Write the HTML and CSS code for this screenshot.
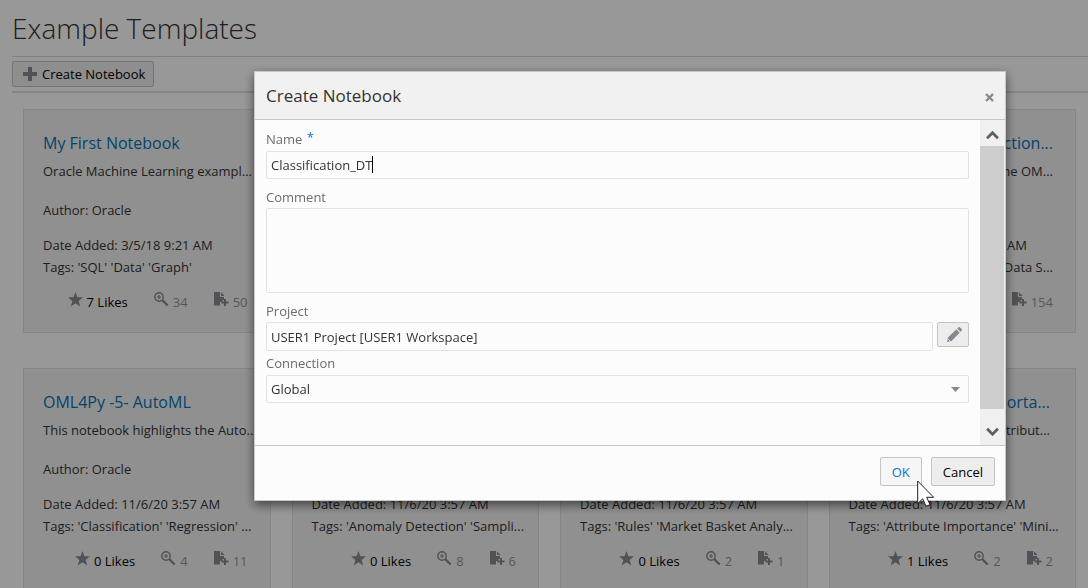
FILE: index.html
```html
<!DOCTYPE html>
<html lang="en">
<head>
<meta charset="utf-8">
<title>Example Templates</title>
<link rel="stylesheet" href="styles.css">
</head>
<body>
<svg class="defs" aria-hidden="true">
  <symbol id="star" viewBox="0 0 14 14"><path d="M7 0l1.8 4.9 5.2.1-4.1 3.300 1.500 5.200L7 10.500l-4.400 3 1.500-5.200L0 5l5.200-.1z" fill="currentColor"/></symbol>
  <symbol id="view" viewBox="0 0 15 15"><circle cx="5" cy="5" r="4.200" fill="none" stroke="currentColor" stroke-width="1.400"/><path d="M5 3v4M3 5h4" stroke="currentColor" stroke-width="1.200"/><path d="M8.200 8.200l5.500 5.300" stroke="currentColor" stroke-width="2.400"/></symbol>
  <symbol id="copy" viewBox="0 0 15 15"><path d="M0 0h6v5h4v3H8.500v2H6v3.500H0z" fill="currentColor"/><path d="M7 .3L10.600 4H7z" fill="currentColor"/><path d="M11 7v7M7.500 10.500h7" stroke="currentColor" stroke-width="2"/></symbol>
</svg>

<main class="page">
  <h1 class="page-title">Example Templates</h1>
  <div class="toolbar">
    <button class="btn create" type="button">
      <svg class="plus" viewBox="0 0 14 14" aria-hidden="true"><path d="M7 0v14M0 7h14" stroke="currentColor" stroke-width="4"/></svg>
      Create Notebook
    </button>
  </div>

  <section class="cards">
    <article class="card">
      <a class="card-title" href="#">My First Notebook</a>
      <p class="desc">Oracle Machine Learning exampl...</p>
      <p class="author">Author: Oracle</p>
      <div class="meta">
        <p>Date Added: 3/5/18 9:21 AM</p>
        <p>Tags: 'SQL' 'Data' 'Graph'</p>
        <div class="stats">
          <span class="stat likes"><svg><use href="#star"/></svg>7 Likes</span>
          <span class="stat"><svg><use href="#view"/></svg>34</span>
          <span class="stat"><svg><use href="#copy"/></svg>50</span>
        </div>
      </div>
    </article>
    <article class="card"></article>
    <article class="card"></article>
    <article class="card end">
      <a class="card-title" href="#">ction...</a>
      <p class="desc">the OM...</p>
      <div class="meta">
        <p class="date-end">AM</p>
        <p>'Data S...</p>
        <div class="stats">
          <span class="stat"><svg><use href="#copy"/></svg>154</span>
        </div>
      </div>
    </article>

    <article class="card">
      <a class="card-title" href="#">OML4Py -5- AutoML</a>
      <p class="desc">This notebook highlights the Auto...</p>
      <p class="author">Author: Oracle</p>
      <div class="meta">
        <p>Date Added: 11/6/20 3:57 AM</p>
        <p>Tags: 'Classification' 'Regression' ...</p>
        <div class="stats">
          <span class="stat likes"><svg><use href="#star"/></svg>0 Likes</span>
          <span class="stat"><svg><use href="#view"/></svg>4</span>
          <span class="stat"><svg><use href="#copy"/></svg>11</span>
        </div>
      </div>
    </article>
    <article class="card">
      <div class="meta">
        <p>Date Added: 11/6/20 3:57 AM</p>
        <p>Tags: 'Anomaly Detection' 'Sampli...</p>
        <div class="stats">
          <span class="stat likes"><svg><use href="#star"/></svg>0 Likes</span>
          <span class="stat"><svg><use href="#view"/></svg>8</span>
          <span class="stat"><svg><use href="#copy"/></svg>6</span>
        </div>
      </div>
    </article>
    <article class="card">
      <div class="meta">
        <p>Date Added: 11/6/20 3:57 AM</p>
        <p>Tags: 'Rules' 'Market Basket Analy...</p>
        <div class="stats">
          <span class="stat likes"><svg><use href="#star"/></svg>0 Likes</span>
          <span class="stat"><svg><use href="#view"/></svg>2</span>
          <span class="stat"><svg><use href="#copy"/></svg>1</span>
        </div>
      </div>
    </article>
    <article class="card">
      <a class="card-title to-end" href="#">Importa...</a>
      <p class="desc to-end">Attribut...</p>
      <div class="meta">
        <p>Date Added: 11/6/20 3:57 AM</p>
        <p>Tags: 'Attribute Importance' 'Mini...</p>
        <div class="stats">
          <span class="stat likes"><svg><use href="#star"/></svg>1 Likes</span>
          <span class="stat"><svg><use href="#view"/></svg>2</span>
          <span class="stat"><svg><use href="#copy"/></svg>2</span>
        </div>
      </div>
    </article>
  </section>
</main>

<div class="overlay">
  <form class="dialog" role="dialog" aria-labelledby="dialog-title">
    <header class="dialog-head">
      <h2 id="dialog-title">Create Notebook</h2>
      <button class="close" type="button" aria-label="Close"><svg viewBox="0 0 9 9"><path d="M1 1l7 7M8 1L1 8" stroke="currentColor" stroke-width="2.300"/></svg></button>
    </header>
    <div class="dialog-body">
      <div class="fields">
        <label for="name">Name <span class="required">*</span></label>
        <div class="name-box">
          <input class="field" id="name" type="text" value="Classification_DT">
          <span class="caret"></span>
        </div>
        <label for="comment">Comment</label>
        <textarea class="field" id="comment"></textarea>
        <label for="project">Project</label>
        <div class="project">
          <input class="field" id="project" type="text" value="USER1 Project [USER1 Workspace]">
          <button class="btn edit" type="button" aria-label="Edit project"><svg viewBox="0 0 15 15"><path d="M0 15l1-4.500L9.300 2.300l3.400 3.400L4.500 14z" fill="currentColor"/><path d="M10.200 1.500L11.600.2q.6-.4 1.200 0l2 2q.4.600 0 1.200l-1.300 1.400z" fill="currentColor"/><path d="M.8 11.800l2.400 2.400" stroke="#ededed" stroke-width=".8"/></svg></button>
        </div>
        <label for="connection">Connection</label>
        <div class="select-box">
          <select class="field" id="connection"><option>Global</option></select>
          <svg class="arrow" viewBox="0 0 9 5" aria-hidden="true"><path d="M0 0h9L4.500 5z" fill="currentColor"/></svg>
        </div>
      </div>
      <div class="scrollbar">
        <button type="button" aria-label="Scroll up"><svg viewBox="0 0 12 9"><path d="M1 7.500l5-5 5 5" fill="none" stroke="currentColor" stroke-width="2.600"/></svg></button>
        <div class="thumb"></div>
        <button class="down" type="button" aria-label="Scroll down"><svg viewBox="0 0 12 9"><path d="M1 1.500l5 5 5-5" fill="none" stroke="currentColor" stroke-width="2.600"/></svg></button>
      </div>
    </div>
    <footer class="dialog-foot">
      <button class="btn ok" type="button">OK<svg class="pointer" viewBox="0 0 19 28" aria-hidden="true"><path d="M.7 1v22.500l5-4.700 3.300 7.500 4-1.700-3.300-7.300h7z" fill="#fff" stroke="#1c1c24"/></svg></button>
      <button class="btn" type="button">Cancel</button>
    </footer>
  </form>
</div>
</body>
</html>
```

FILE: styles.css
```css
* { box-sizing: border-box; }

body {
  margin: 0;
  height: 100vh;
  overflow: hidden;
  background: #fdfdfd;
  color: #333;
  font: 13px/20px "Open Sans", "Noto Sans", sans-serif;
}

h1, h2, p { margin: 0; font-weight: 400; }

button, input, textarea, select { font: inherit; color: inherit; }

.defs { position: absolute; width: 0; height: 0; }

.page { padding-left: 12px; }

.page-title {
  height: 57px;
  border-bottom: 1px solid #d6d6d6;
  font-size: 28px;
  font-weight: 300;
  line-height: 56px;
}

.toolbar {
  padding: 4px 0;
  border-bottom: 2px solid #dcdcdc;
}

.btn {
  display: flex;
  align-items: center;
  justify-content: center;
  border: 1px solid #c4c4c4;
  border-radius: 2px;
  background: #ededed;
  color: #000;
  white-space: nowrap;
}

.create { height: 26px; padding: 0 8px 0 10px; gap: 5px; }
.plus { width: 14px; height: 14px; color: #84898f; }

.cards {
  display: grid;
  grid-template-columns: repeat(4, minmax(0, 1fr));
  gap: 35px 21px;
  padding: 16px 12px 0 11px;
}

.card {
  display: flex;
  flex-direction: column;
  min-height: 224px;
  padding: 21px 19px 20px;
  border: 1px solid #dfdfdf;
  background: #f1f1f1;
  white-space: nowrap;
}

.card-title {
  color: #0572b8;
  font-size: 16px;
  line-height: 24px;
  text-decoration: none;
}

.desc { margin-top: 6px; }
.author { margin-top: 19px; }
.meta { margin-top: auto; }
.meta p { line-height: 22px; }
.end, .to-end { text-align: right; padding-right: 22px; }
.card > .to-end { padding-right: 6px; }
.date-end { padding-right: 26px; }

.stats {
  display: flex;
  justify-content: flex-end;
  gap: 26px;
  margin-top: 14px;
  padding-right: 3px;
  color: #929292;
}

.end .stats { padding-right: 0; }
.stat { display: flex; gap: 4px; }
.stat svg { width: 15px; height: 15px; color: #84898f; }
.likes { color: #000; }

.overlay {
  position: fixed;
  inset: 0;
  padding: 71px 82px 0 254px;
  background: rgba(0, 0, 0, .4);
}

.dialog {
  border: 1px solid #c8c8c8;
  background: #fcfcfc;
  box-shadow: 0 4px 10px rgba(0, 0, 0, .55);
}

.dialog-head {
  display: flex;
  align-items: center;
  justify-content: space-between;
  height: 48px;
  padding: 0 11px;
  border-bottom: 1px solid #c8c8c8;
  background: #f1f1f1;
}

.dialog-head h2 { font-size: 17px; line-height: 24px; }

.close {
  display: flex;
  margin-top: 4px;
  padding: 0;
  border: 0;
  background: none;
  color: #84898f;
}
.close svg { width: 9px; height: 9px; }

.dialog-body { display: flex; height: 325px; }

.fields {
  display: flex;
  flex: 1;
  flex-direction: column;
  min-width: 0;
  padding: 9px 11px 0;
}

label { color: #6c6c6c; line-height: 20px; }
.required { margin-left: 1px; color: #0572ce; vertical-align: 2px; line-height: 1; }

.field {
  display: block;
  width: 100%;
  height: 28px;
  margin: 0;
  padding: 0 4px;
  border: 1px solid #e2e2e2;
  border-radius: 2px;
  outline: 0;
  background: #fcfcfc;
  color: #333;
  appearance: none;
}

.name-box { position: relative; margin: 2px 0 8px; }
.caret { position: absolute; top: 5px; left: 106px; width: 1px; height: 17px; background: #000; }

textarea.field { height: 85px; margin: 1px 0 8px; resize: none; }

.project { display: flex; align-items: flex-start; gap: 4px; margin: 1px 0 2px; }
.project .field { height: 29px; }
.edit { flex: none; width: 32px; height: 25px; padding: 0 0 0 2px; color: #84898f; }
.edit svg { width: 15px; height: 15px; }

.select-box { position: relative; margin-top: 2px; }
.arrow { position: absolute; top: 12px; right: 9px; width: 9px; height: 5px; color: #84898f; }

.scrollbar {
  display: flex;
  flex-direction: column;
  width: 25px;
  padding-right: 1px;
  background: #f0f0f0;
}
.scrollbar button {
  display: flex;
  align-items: center;
  justify-content: center;
  height: 26px;
  padding: 3px 0 0;
  border: 0;
  background: #f0f0f0;
  color: #606060;
}
.scrollbar svg { width: 13px; height: 10px; }
.thumb { flex: 1; background: #cdcdcd; }
.scrollbar .down { height: 36px; padding-top: 10px; }

.dialog-foot {
  display: flex;
  align-items: flex-start;
  justify-content: flex-end;
  gap: 9px;
  height: 55px;
  padding: 11px 10px 0;
  border-top: 1px solid #c8c8c8;
}
.dialog-foot .btn { height: 29px; padding: 0 11px; }
.dialog-foot .ok { position: relative; background: #f6f6f6; color: #0572ce; }
.pointer { position: absolute; top: 22px; left: 36px; width: 19px; height: 28px; }
```
